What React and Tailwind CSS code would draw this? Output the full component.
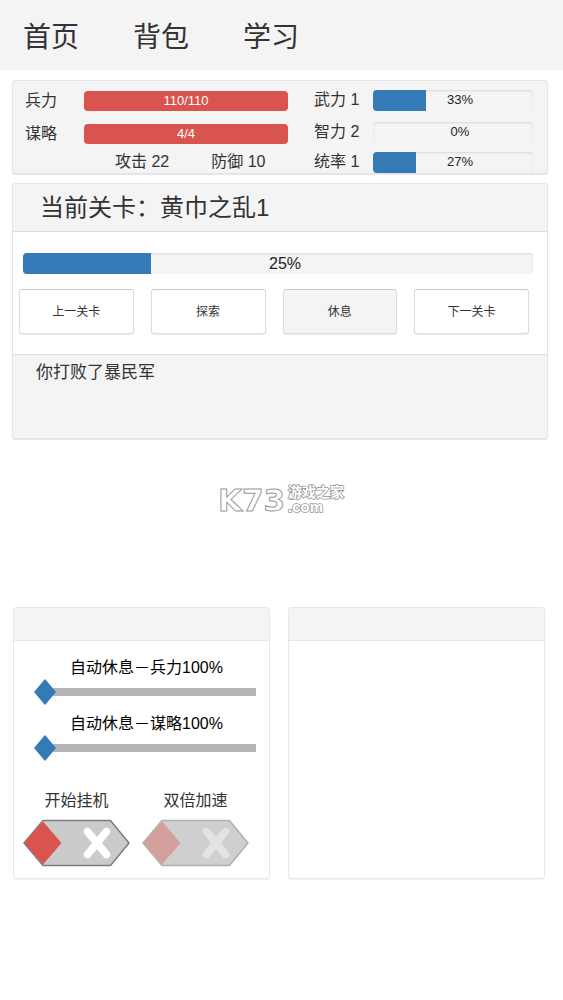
import React, { useState } from 'react';

const NAV_ITEMS = ['首页', '背包', '学习'];

const POOLS = [
  { label: '兵力', value: '110/110' },
  { label: '谋略', value: '4/4' },
];

const SKILLS = [
  { label: '武力 1', percent: 33, row: 'h-8' },
  { label: '智力 2', percent: 0, row: 'h-8' },
  { label: '统率 1', percent: 27, row: 'h-7' },
];

const ACTIONS = ['上一关卡', '探索', '休息', '下一关卡'];

const Progress = ({ percent, label, textClass }) => (
  <div
    role="progressbar"
    aria-label={label}
    aria-valuenow={percent}
    className="relative flex h-[21px] flex-1 items-center justify-center overflow-hidden rounded bg-[#f4f4f4] shadow-[inset_0_1px_2px_rgba(0,0,0,0.12)]"
  >
    <div className="absolute inset-y-0 left-0 bg-[#337ab7]" style={{ width: `${percent}%` }} />
    <span className={`relative pl-[14px] text-[#222] ${textClass}`}>{percent}%</span>
  </div>
);

const StatsPanel = () => (
  <section className="mt-[10px] mr-[15px] ml-3 flex h-[94px] rounded-[3px] border border-[#e4e4e4] bg-[#f4f4f4] pr-[14px] pl-3 text-base leading-5 shadow-[0_1px_1px_rgba(0,0,0,0.1)]">
    <div className="flex-1 pt-[3px]">
      {POOLS.map((pool) => (
        <div key={pool.label} className="flex h-[33px] items-center">
          <span className="w-[59px]">{pool.label}</span>
          <div className="flex h-5 flex-1 items-center justify-center rounded bg-[#d9534f] text-[13px] text-white">
            {pool.value}
          </div>
        </div>
      ))}
      <div className="flex h-6 items-center gap-[42px] pl-[90px]">
        <span>攻击 22</span>
        <span>防御 10</span>
      </div>
    </div>
    <div className="ml-[26px] w-[219px] pt-[3px]">
      {SKILLS.map((skill) => (
        <div key={skill.label} className={`flex items-center ${skill.row}`}>
          <span className="w-[59px]">{skill.label}</span>
          <Progress percent={skill.percent} label={skill.label} textClass="text-[13px]" />
        </div>
      ))}
    </div>
  </section>
);

const StagePanel = () => (
  <section className="mt-[9px] mr-[15px] ml-3 overflow-hidden rounded-[3px] border border-[#e4e4e4] bg-white shadow-[0_1px_1px_rgba(0,0,0,0.1)]">
    <h2 className="flex h-12 items-center border-b border-[#dedede] bg-[#f4f4f4] pl-[27px] text-2xl">
      当前关卡：黄巾之乱1
    </h2>
    <div className="pt-[21px] pb-5">
      <div className="flex pr-[14px] pl-[10px]">
        <Progress percent={25} label="关卡" textClass="text-base" />
      </div>
      <div className="mt-[15px] flex gap-[17px] pr-[18px] pl-[6px]">
        {ACTIONS.map((action) => (
          <button
            key={action}
            type="button"
            className={`h-[45px] flex-1 rounded-[3px] border border-[#dcdcdc] border-t-[#c8c8c8] text-xs shadow-[0_1px_1px_rgba(0,0,0,0.08)] ${
              action === '休息' ? 'bg-[#f4f4f4]' : 'bg-white'
            }`}
          >
            {action}
          </button>
        ))}
      </div>
    </div>
    <div className="min-h-[84px] border-t border-[#dedede] bg-[#f4f4f4] pt-2 pl-[23px] text-[17px] leading-5">
      你打败了暴民军
    </div>
  </section>
);

const SiteLogo = () => (
  <svg
    className="mx-auto mt-11 block h-9 w-[126px]"
    viewBox="0 0 126 36"
    fill="#fff"
    stroke="#999"
    strokeWidth="1"
    aria-label="K73 游戏之家"
  >
    <text x="-1" y="28" fontFamily="DejaVu Sans, sans-serif" fontSize="31" fontWeight="700">
      K73
    </text>
    <g paintOrder="stroke" strokeWidth="1.600" fontFamily="Liberation Sans, Noto Sans CJK SC, sans-serif" fontWeight="700">
      <text x="69" y="14" fontSize="14">
        游戏之家
      </text>
      <text x="69" y="29" fontSize="15">
        .com
      </text>
    </g>
  </svg>
);

const RestSlider = ({ id, name }) => {
  // The handle sits on the left at 100% and the threshold drops as it moves right
  const [threshold, setThreshold] = useState(100);

  return (
    <div className="flex flex-col">
      <label htmlFor={id} className="pl-[3px] text-center leading-[22px] text-black">
        自动休息－{name}{threshold}%
      </label>
      <input
        id={id}
        type="range"
        min="0"
        max="100"
        value={100 - threshold}
        onChange={(e) => setThreshold(100 - Number(e.target.value))}
        className="h-[26px] w-full appearance-none bg-transparent [&::-webkit-slider-runnable-track]:h-2 [&::-webkit-slider-runnable-track]:bg-[linear-gradient(to_right,transparent_11px,#b5b5b5_11px)] [&::-webkit-slider-thumb]:-mt-[9px] [&::-webkit-slider-thumb]:h-[26px] [&::-webkit-slider-thumb]:w-[22px] [&::-webkit-slider-thumb]:appearance-none [&::-webkit-slider-thumb]:bg-[#337ab7] [&::-webkit-slider-thumb]:[clip-path:polygon(50%_0,100%_50%,50%_100%,0_50%)]"
      />
    </div>
  );
};

const HexSwitch = ({ label, disabled }) => (
  <label className="relative flex flex-col items-center">
    <span className="leading-6">{label}</span>
    <input type="checkbox" className="sr-only" disabled={disabled} />
    <svg className="mt-[6px] h-12 w-[107px]" viewBox="0 0 107 48">
      <path
        d="M1 24 L20 1.500 H87.500 L106 24 L87.500 46.500 H20 Z"
        fill={disabled ? '#cfcfcf' : '#cbcbcb'}
        stroke={disabled ? '#b0b0b0' : '#7d7d7d'}
        strokeWidth="1.500"
      />
      <path d="M1.500 24 L20 2.500 L38.500 24 L20 45.500 Z" fill={disabled ? '#d4a09e' : '#d9534f'} />
      <path
        d="M64.500 12.500 L83.500 35.500 M83.500 12.500 L64.500 35.500"
        stroke={disabled ? '#e3e3e3' : '#fff'}
        strokeWidth="7.500"
        strokeLinecap="round"
      />
    </svg>
  </label>
);

const Card = ({ children }) => (
  <section className="min-h-[272px] flex-1 overflow-hidden rounded-[3px] border border-[#e8e8e8] bg-white shadow-[0_1px_1px_rgba(0,0,0,0.06)]">
    <div className="h-[33px] border-b border-[#e8e8e8] bg-[#f4f4f4]" />
    {children}
  </section>
);

export default function App() {
  return (
    <div
      lang="zh-CN"
      className="min-h-screen bg-white font-['Liberation_Sans','Noto_Sans_CJK_SC',sans-serif] text-[#333]"
    >
      <nav className="flex h-[70px] items-center gap-[54px] bg-[#f4f4f4] pt-[6px] pl-[23px] text-[28px]">
        {NAV_ITEMS.map((item) => (
          <a key={item} href="#">
            {item}
          </a>
        ))}
      </nav>

      <StatsPanel />
      <StagePanel />
      <SiteLogo />

      <div className="mt-[88px] mr-[18px] ml-[13px] flex gap-[18px]">
        <Card>
          <div className="flex flex-col gap-2 pt-4 pr-[13px] pl-5">
            <RestSlider id="rest-troops" name="兵力" />
            <RestSlider id="rest-strategy" name="谋略" />
          </div>
          <div className="mt-7 flex gap-3 pl-[9px]">
            <HexSwitch label="开始挂机" />
            <HexSwitch label="双倍加速" disabled />
          </div>
        </Card>
        <Card />
      </div>
    </div>
  );
}
